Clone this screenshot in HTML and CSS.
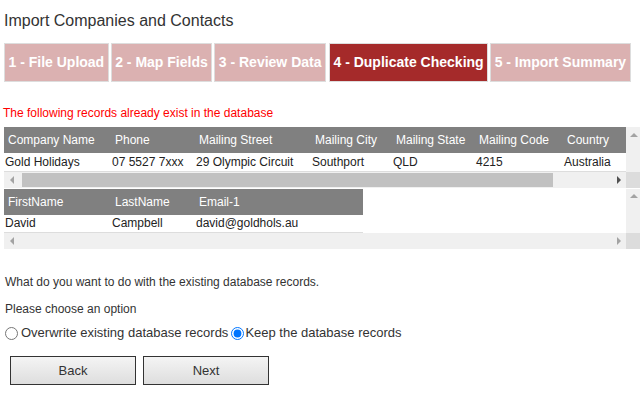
FILE: index.html
```html
<!DOCTYPE html>
<html lang="en">
<head>
  <meta charset="UTF-8" />
  <title>Import Companies and Contacts</title>
  <link rel="stylesheet" href="styles.css">
</head>
<body>
  <h1 class="title">Import Companies and Contacts</h1>

  <!-- Wizard steps -->
  <div class="steps">
    <div class="step">1 - File Upload</div>
    <div class="step">2 - Map Fields</div>
    <div class="step">3 - Review Data</div>
    <div class="step active">4 - Duplicate Checking</div>
    <div class="step">5 - Import Summary</div>
  </div>

  <p class="warning">The following records already exist in the database</p>

  <!-- Companies -->
  <div class="grid-box">
    <div class="grid-view">
      <table class="grid grid-company">
        <colgroup>
          <col style="width:107px"><col style="width:84px"><col style="width:116px"><col style="width:81px">
          <col style="width:83px"><col style="width:88px"><col style="width:134px">
        </colgroup>
        <tr>
          <th>Company Name</th><th>Phone</th><th>Mailing Street</th><th>Mailing City</th>
          <th>Mailing State</th><th>Mailing Code</th><th>Country</th>
        </tr>
        <tr>
          <td>Gold Holidays</td><td>07 5527 7xxx</td><td>29 Olympic Circuit</td><td>Southport</td>
          <td>QLD</td><td>4215</td><td>Australia</td>
        </tr>
      </table>
    </div>
    <div class="vbar"><span class="arrow arrow-up"></span></div>
    <div class="hbar">
      <span class="arrow arrow-left"></span>
      <span class="thumb" style="width:531px"></span>
      <span class="arrow arrow-right on"></span>
    </div>
    <div class="corner"></div>
  </div>

  <!-- Contacts -->
  <div class="grid-box">
    <div class="grid-view">
      <table class="grid grid-contact">
        <colgroup>
          <col style="width:107px"><col style="width:84px"><col style="width:168px">
        </colgroup>
        <tr><th>FirstName</th><th>LastName</th><th>Email-1</th></tr>
        <tr><td>David</td><td>Campbell</td><td>david@goldhols.au</td></tr>
      </table>
    </div>
    <div class="vbar"><span class="arrow arrow-up"></span></div>
    <div class="hbar">
      <span class="arrow arrow-left"></span>
      <span class="arrow arrow-right"></span>
    </div>
    <div class="corner"></div>
  </div>

  <p class="question">What do you want to do with the existing database records.</p>
  <p class="question choose">Please choose an option</p>

  <div class="options">
    <input type="radio" name="dup" id="optOverwrite" class="radio-first"><label for="optOverwrite">Overwrite existing database records</label><input type="radio" name="dup" id="optKeep" class="radio-second" checked><label for="optKeep">Keep the database records</label>
  </div>

  <div class="actions">
    <button class="btn">Back</button>
    <button class="btn">Next</button>
  </div>
</body>
</html>
```

FILE: styles.css
```css
/* BASE */
* {
  box-sizing: border-box;
}
body {
  margin: 0;
  font-family: "Liberation Sans", Arial, sans-serif;
  color: #333;
  background: #fff;
  overflow: hidden;
}
.title {
  margin: 0;
  padding: 12px 4px 0;
  font-size: 16px;
  font-weight: normal;
  line-height: 18px;
}
/* STEPS */
.steps {
  display: flex;
  gap: 2px;
  margin-top: 13px;
  padding-left: 4px;
}
.step {
  height: 39px;
  line-height: 37px;
  padding: 0 3.5px;
  border: 1px solid #ddd;
  background: #dbb1b1;
  color: #fff;
  font-size: 14px;
  font-weight: bold;
  white-space: nowrap;
}
.step.active {
  background: #a52a2a;
  margin-left: 1px;
}
/* MESSAGE */
.warning {
  margin: 24px 0 0;
  padding-left: 3px;
  font-size: 12px;
  line-height: 14px;
  color: #f00;
}
/* GRIDS WITH SCROLLBARS */
.grid-box {
  display: grid;
  grid-template-columns: 1fr 15px;
  grid-template-rows: auto 16px;
  margin-left: 4px;
  width: 637px;
}
.warning + .grid-box {
  margin-top: 7px;
}
.grid-box + .grid-box {
  margin-top: 1px;
}
.grid-view {
  overflow: hidden;
}
.grid {
  border-collapse: collapse;
  table-layout: fixed;
  font-size: 12px;
}
.grid-company {
  width: 693px;
}
.grid-contact {
  width: 359px;
}
.grid th {
  height: 26px;
  padding: 0 0 0 4px;
  background: #808080;
  color: #fff;
  font-weight: normal;
  text-align: left;
  white-space: nowrap;
}
.grid td {
  height: 18px;
  padding: 0 0 0 1px;
  color: #222;
  border-bottom: 1px solid #ddd;
  white-space: nowrap;
}
.vbar, .hbar {
  background: #f0f0f0;
}
.hbar {
  display: flex;
  align-items: center;
}
.corner {
  background: #dcdcdc;
}
.thumb {
  height: 14px;
  margin-left: 3px;
  background: #c1c1c1;
}
.arrow {
  display: flex;
  align-items: center;
  justify-content: center;
  width: 15px;
  height: 15px;
  flex-shrink: 0;
}
.arrow::before {
  content: "";
  width: 0;
  height: 0;
}
.arrow-left::before {
  border-right: 4px solid #a3a3a3;
  border-top: 4px solid transparent;
  border-bottom: 4px solid transparent;
}
.arrow-right {
  margin-left: auto;
}
.arrow-right::before {
  border-left: 4px solid #a3a3a3;
  border-top: 4px solid transparent;
  border-bottom: 4px solid transparent;
}
.arrow-right.on::before {
  border-left-color: #505050;
}
.arrow-up::before {
  border-bottom: 4px solid #a3a3a3;
  border-left: 4px solid transparent;
  border-right: 4px solid transparent;
}
/* QUESTION */
.question {
  margin: 0;
  padding-left: 5px;
  font-size: 12px;
  line-height: 14px;
}
.grid-box + .question {
  margin-top: 26px;
}
.question.choose {
  margin-top: 13px;
}
.options {
  display: flex;
  align-items: center;
  margin-top: 9px;
  font-size: 13px;
  line-height: 16px;
}
.options input {
  width: 13px;
  height: 13px;
}
.radio-first {
  margin: 0 3px 0 5px;
}
.radio-second {
  margin: 0 1px 0 3px;
}
/* BUTTONS */
.actions {
  display: flex;
  gap: 7px;
  margin-top: 15px;
  padding-left: 10px;
}
.btn {
  width: 126px;
  height: 29px;
  border: 1px solid #333;
  border-radius: 0;
  background: linear-gradient(#f4f4f4, #dedede);
  color: #333;
  font-family: "Liberation Sans", Arial, sans-serif;
  font-size: 13px;
  cursor: pointer;
}
```
